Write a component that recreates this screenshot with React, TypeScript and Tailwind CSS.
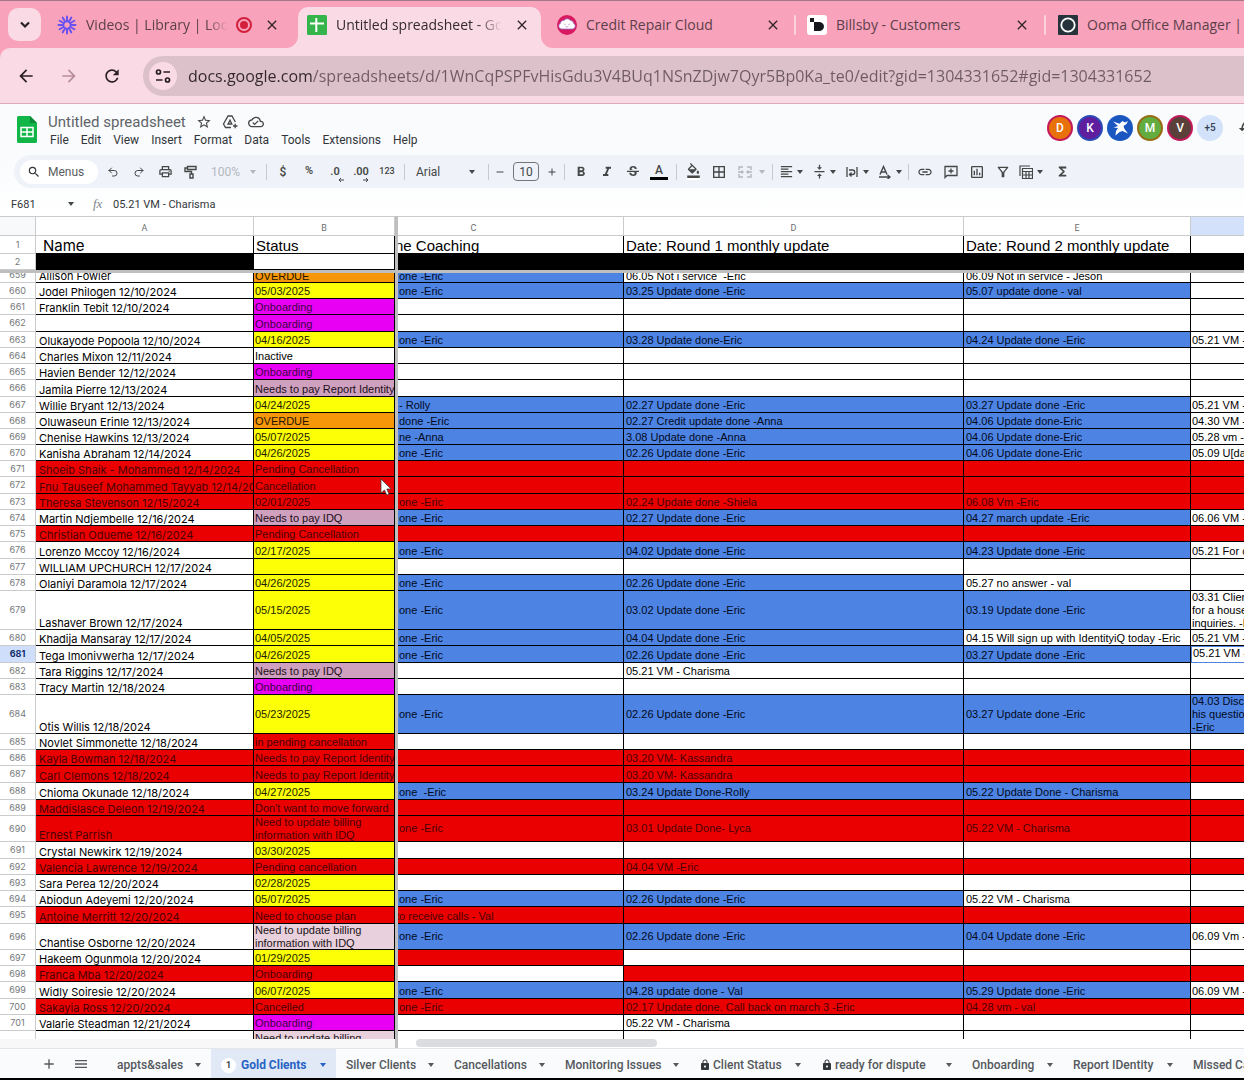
import type { ReactNode } from "react";
import { Redo2, Undo2 } from "lucide-react";
import {
    MdAdd,
    MdArrowBack,
    MdArrowForward,
    MdBorderAll,
    MdClose,
    MdFormatAlignLeft,
    MdFormatBold,
    MdFormatColorFill,
    MdFormatItalic,
    MdFunctions,
    MdHistory,
    MdInsertLink,
    MdLock,
    MdMenu,
    MdOutlineCloudDone,
    MdOutlineFilterAlt,
    MdOutlineInsertChart,
    MdOutlinePrint,
    MdRefresh,
    MdRemove,
    MdSearch,
    MdStarBorder,
    MdStrikethroughS,
    MdVerticalAlignCenter,
} from "react-icons/md";

type Tone = "white" | "blue" | "red" | "yellow" | "orange" | "magenta" | "mauve" | "pink" | "black";

type Cell = { tone: Tone; text: string; shift?: boolean };

type Row = {
    id: string;
    height: number;
    name: Cell;
    status: Cell;
    rest: Cell[];
};

const TONES: Record<Tone, string> = {
    white: "bg-white text-black",
    blue: "bg-[#4d83e2] text-[#020a1c]",
    red: "bg-[#ea0000] text-[#4a0000]",
    yellow: "bg-[#fdff06] text-[#1c1c00]",
    orange: "bg-[#f59708] text-[#241400]",
    magenta: "bg-[#e800f4] text-[#3c0044]",
    mauve: "bg-[#d0a0bf] text-[#1c0f18]",
    pink: "bg-[#e9d0dd] text-[#1c1418]",
    black: "bg-black text-black",
};

const cell = (tone: Tone) => (text = ""): Cell => ({ tone, text });
const white = cell("white");
const blue = cell("blue");
const red = cell("red");
const yellow = cell("yellow");
const orange = cell("orange");
const magenta = cell("magenta");
const mauve = cell("mauve");
const pink = cell("pink");

const blank = () => [white(), white(), white(), white()];
const cancelled = (c = "", d = "", e = "") => [red(c), red(d), red(e), red()];

const row = (id: string, height: number, name: Cell, status: Cell, rest: Cell[]): Row => ({ id, height, name, status, rest });

const ROWS: Row[] = [
    row("659", 10, white("Allison Fowler"), orange("OVERDUE"), [blue("one -Eric"), white("06.05 Not i service  -Eric"), white("06.09 Not in service - Jeson"), white()]),
    row("660", 16, white("Jodel Philogen 12/10/2024"), yellow("05/03/2025"), [blue("one -Eric"), blue("03.25 Update done -Eric"), blue("05.07 update done - val"), white()]),
    row("661", 16, white("Franklin Tebit 12/10/2024"), magenta("Onboarding"), blank()),
    row("662", 17, white(), magenta("Onboarding"), blank()),
    row("663", 16, white("Olukayode Popoola 12/10/2024"), yellow("04/16/2025"), [blue("one -Eric"), blue("03.28 Update done-Eric"), blue("04.24 Update done -Eric"), white("05.21 VM -")]),
    row("664", 16, white("Charles Mixon 12/11/2024"), white("Inactive"), blank()),
    row("665", 16, white("Havien Bender 12/12/2024"), magenta("Onboarding"), blank()),
    row("666", 17, white("Jamila Pierre 12/13/2024"), mauve("Needs to pay Report Identity"), blank()),
    row("667", 16, white("Willie Bryant 12/13/2024"), yellow("04/24/2025"), [blue("- Rolly"), blue("02.27 Update done -Eric"), blue("03.27 Update done -Eric"), white("05.21 VM -")]),
    row("668", 16, white("Oluwaseun Erinle 12/13/2024"), orange("OVERDUE"), [blue("done -Eric"), blue("02.27 Credit update done -Anna"), blue("04.06 Update done-Eric"), white("04.30 VM -")]),
    row("669", 16, white("Chenise Hawkins 12/13/2024"), yellow("05/07/2025"), [blue("ne -Anna"), blue("3.08 Update done -Anna"), blue("04.06 Update done-Eric"), white("05.28 vm -")]),
    row("670", 16, white("Kanisha Abraham 12/14/2024"), yellow("04/26/2025"), [blue("one -Eric"), blue("02.26 Update done -Eric"), blue("04.06 Update done-Eric"), white("05.09 U[da")]),
    row("671", 16, red("Shoeib Shaik - Mohammed 12/14/2024"), red("Pending Cancellation"), cancelled()),
    row("672", 17, red("Fnu Tauseef Mohammed Tayyab 12/14/20"), red("Cancellation"), cancelled()),
    row("673", 16, red("Theresa Stevenson 12/15/2024"), red("02/01/2025"), cancelled("one -Eric", "02.24 Update done -Shiela", "06.08 Vm -Eric")),
    row("674", 16, white("Martin Ndjembelle 12/16/2024"), mauve("Needs to pay IDQ"), [blue("one -Eric"), blue("02.27 Update done -Eric"), blue("04.27 march update -Eric"), white("06.06 VM -")]),
    row("675", 16, red("Christian Odueme 12/16/2024"), red("Pending Cancellation"), cancelled()),
    row("676", 17, white("Lorenzo Mccoy 12/16/2024"), yellow("02/17/2025"), [blue("one -Eric"), blue("04.02 Update done -Eric"), blue("04.23 Update done -Eric"), white("05.21 For c")]),
    row("677", 16, white("WILLIAM UPCHURCH 12/17/2024"), yellow(), blank()),
    row("678", 16, white("Olaniyi Daramola 12/17/2024"), yellow("04/26/2025"), [blue("one -Eric"), blue("02.26 Update done -Eric"), white("05.27 no answer - val"), white()]),
    row("679", 39, white("Lashaver Brown 12/17/2024"), yellow("05/15/2025"), [blue("one -Eric"), blue("03.02 Update done -Eric"), blue("03.19 Update done -Eric"), white("03.31 Clien\nfor a house\ninquiries. -E")]),
    row("680", 16, white("Khadija Mansaray 12/17/2024"), yellow("04/05/2025"), [blue("one -Eric"), blue("04.04 Update done -Eric"), white("04.15 Will sign up with IdentityiQ today -Eric"), white("05.21 VM -")]),
    row("681", 17, white("Tega Imonivwerha 12/17/2024"), yellow("04/26/2025"), [blue("one -Eric"), blue("02.26 Update done -Eric"), blue("03.27 Update done -Eric"), white("05.21 VM -")]),
    row("682", 16, white("Tara Riggins 12/17/2024"), mauve("Needs to pay IDQ"), [white(), white("05.21 VM - Charisma"), white(), white()]),
    row("683", 16, white("Tracy Martin 12/18/2024"), magenta("Onboarding"), blank()),
    row("684", 39, white("Otis Willis 12/18/2024"), yellow("05/23/2025"), [blue("one -Eric"), blue("02.26 Update done -Eric"), blue("03.27 Update done -Eric"), blue("04.03 Disc\nhis questio\n-Eric")]),
    row("685", 16, white("Novlet Simmonette 12/18/2024"), red("in pending cancellation"), blank()),
    row("686", 16, red("Kayla Bowman 12/18/2024"), red("Needs to pay Report Identity"), cancelled("", "03.20 VM- Kassandra")),
    row("687", 17, red("Carl Clemons 12/18/2024"), red("Needs to pay Report Identity"), cancelled("", "03.20 VM- Kassandra")),
    row("688", 17, white("Chioma Okunade 12/18/2024"), yellow("04/27/2025"), [blue("one  -Eric"), blue("03.24 Update Done-Rolly"), blue("05.22 Update Done - Charisma"), white()]),
    row("689", 16, red("Maddislasce Deleon 12/19/2024"), red("Don't want to move forward"), cancelled()),
    row("690", 26, red("Ernest Parrish"), red("Need to update billing\ninformation with IDQ"), cancelled("one -Eric", "03.01 Update Done- Lyca", "05.22 VM - Charisma")),
    row("691", 17, white("Crystal Newkirk 12/19/2024"), yellow("03/30/2025"), blank()),
    row("692", 16, red("Valencia Lawrence 12/19/2024"), red("Pending cancellation"), cancelled("", "04.04 VM -Eric")),
    row("693", 16, white("Sara Perea 12/20/2024"), yellow("02/28/2025"), blank()),
    row("694", 16, white("Abiodun Adeyemi 12/20/2024"), yellow("05/07/2025"), [blue("one -Eric"), blue("02.26 Update done -Eric"), white("05.22 VM - Charisma"), white()]),
    row("695", 17, red("Antoine Merritt 12/20/2024"), red("Need to choose plan"), [{ tone: "red", text: "to receive calls - Val", shift: true }, red(), red(), red()]),
    row("696", 26, white("Chantise Osborne 12/20/2024"), pink("Need to update billing\ninformation with IDQ"), [blue("one -Eric"), blue("02.26 Update done -Eric"), blue("04.04 Update done -Eric"), white("06.09 Vm -")]),
    row("697", 16, white("Hakeem Ogunmola 12/20/2024"), yellow("01/29/2025"), [red(), white(), white(), white()]),
    row("698", 16, red("Franca Mba 12/20/2024"), red("Onboarding"), [white(), red(), red(), red()]),
    row("699", 17, white("Widly Soiresie 12/20/2024"), yellow("06/07/2025"), [blue("one -Eric"), blue("04.28 update done - Val"), blue("05.29 Update done -Eric"), white("06.09 VM -")]),
    row("700", 16, red("Sakayia Ross 12/20/2024"), red("Cancelled"), cancelled("one -Eric", "02.17 Update done. Call back on march 3 -Eric", "04.28 vm - val")),
    row("701", 16, white("Valarie Steadman 12/21/2024"), magenta("Onboarding"), [white(), white("05.22 VM - Charisma"), white(), white()]),
];

const MENUS = ["File", "Edit", "View", "Insert", "Format", "Data", "Tools", "Extensions", "Help"];

const SHEETS = [
    { label: "appts&sales", width: "w-[104px]" },
    { label: "Gold Clients", width: "w-[125px]", active: true },
    { label: "Silver Clients", width: "w-[108px]" },
    { label: "Cancellations", width: "w-[111px]" },
    { label: "Monitoring Issues", width: "w-[134px]" },
    { label: "Client Status", width: "w-[122px]", locked: true },
    { label: "ready for dispute", width: "w-[151px]", locked: true },
    { label: "Onboarding", width: "w-[101px]" },
    { label: "Report IDentity", width: "w-[120px]" },
    { label: "Missed Calls", width: "w-[120px]" },
];

/* ---------- Browser chrome ---------- */

function LoomIcon() {
    return (
        <svg viewBox="0 0 20 20" className="size-5 shrink-0">
            <g stroke="#6a52f0" strokeWidth="2" strokeLinecap="round">
                {[0, 30, 60, 90, 120, 150, 180, 210, 240, 270, 300, 330].map((a) => (
                    <line key={a} x1="10" y1="1.5" x2="10" y2="6" transform={`rotate(${a} 10 10)`} />
                ))}
            </g>
            <circle cx="10" cy="10" r="3.6" fill="none" stroke="#6a52f0" strokeWidth="1.8" />
        </svg>
    );
}

function SheetFavicon() {
    return (
        <svg viewBox="0 0 20 20" className="size-5 shrink-0">
            <rect width="20" height="20" rx="1.5" fill="#34b44a" />
            <path d="M9.3 3v14M3 8.5h14" stroke="#fff" strokeWidth="2" />
        </svg>
    );
}

function CloudFavicon() {
    return (
        <svg viewBox="0 0 20 20" className="size-5 shrink-0">
            <circle cx="10" cy="10" r="10" fill="#d81b60" />
            <path d="M4.500 14a3 3 0 0 1-1-5.700A3 3 0 0 1 7 5.500a4 4 0 0 1 6.500 0 3 3 0 0 1 3 2.800A3 3 0 0 1 15.500 14z" fill="#fff" stroke="#8a6bd0" strokeWidth=".7" />
            <path d="M7 9.500q.8-1 1.600 0M11.400 9.500q.8-1 1.600 0M8.500 11.500q1.500 1 3 0" stroke="#b98ac4" strokeWidth=".8" fill="none" />
        </svg>
    );
}

function BillsbyIcon() {
    return (
        <svg viewBox="0 0 20 20" className="size-5 shrink-0">
            <rect width="20" height="20" rx="3" fill="#fff" />
            <path d="M3 3h4v4H3zM7 7h5a5 4.500 0 0 1 0 9H7z" fill="#15171c" />
        </svg>
    );
}

function OomaIcon() {
    return (
        <svg viewBox="0 0 20 20" className="size-5 shrink-0">
            <rect width="20" height="20" rx="1" fill="#27333a" />
            <circle cx="10" cy="10" r="6.700" fill="none" stroke="#fff" strokeWidth="1.800" />
        </svg>
    );
}

type TabProps = { icon: ReactNode; title: string; width: string; active?: boolean; recording?: boolean; fade?: boolean; divider?: boolean };

function BrowserTab({ icon, title, width, active, recording, fade, divider }: TabProps) {
    return (
        <div
            className={`relative flex h-full shrink-0 items-center pb-[6px] ${width} ${active ? "rounded-t-[10px] bg-[#fadae5] text-[#332a2e]" : "text-[#5c4049]"}`}
        >
            {active && (
                <>
                    <svg viewBox="0 0 12 12" className="absolute bottom-0 -left-3 size-3"><path d="M12 0v12H0A12 12 0 0 0 12 0" fill="#fadae5" /></svg>
                    <svg viewBox="0 0 12 12" className="absolute -right-3 bottom-0 size-3"><path d="M0 0v12h12A12 12 0 0 1 0 0" fill="#fadae5" /></svg>
                </>
            )}
            <button className="flex min-w-0 flex-1 items-center gap-[9px] text-left">
                {icon}
                <span className={`min-w-0 flex-1 overflow-hidden text-sm whitespace-nowrap ${fade ? "mask-r-from-85%" : ""}`}>{title}</span>
            </button>
            {recording && (
                <span className="ml-2 flex size-4 items-center justify-center rounded-full border-2 border-[#d3203c]">
                    <span className="size-2 rounded-full bg-[#d3203c]" />
                </span>
            )}
            <button aria-label={`Close ${title}`} className="ml-3 text-[#33262b]">
                <MdClose className="size-4" />
            </button>
            {divider && <span className="absolute right-0 h-5 w-[2px] rounded bg-[#fbd3df]" />}
        </div>
    );
}

function Browser() {
    return (
        <div className="bg-[#f8a2bc] font-['Open_Sans','Noto_Sans',sans-serif]">
            <div className="flex h-12 items-stretch overflow-hidden border-t border-[#a3788a] pt-[6px]">
                <button aria-label="Search tabs" className="mt-px ml-2 flex size-[33px] shrink-0 items-center justify-center rounded-[10px] bg-[#fadae5]">
                    <svg viewBox="0 0 12 8" className="h-2 w-3"><path d="M2 1.500l4 4 4-4" fill="none" stroke="#2a1f23" strokeWidth="2.200" /></svg>
                </button>
                <BrowserTab icon={<LoomIcon />} title="Videos | Library | Loom" width="w-[257px] pl-4 pr-[18px]" recording fade />
                <BrowserTab icon={<SheetFavicon />} title="Untitled spreadsheet - Google Sheets" width="w-[243px] pl-[9px] pr-[11px]" active fade />
                <BrowserTab icon={<CloudFavicon />} title="Credit Repair Cloud" width="w-[255px] pl-4 pr-[15px]" divider />
                <BrowserTab icon={<BillsbyIcon />} title="Billsby - Customers" width="w-[250px] pl-[11px] pr-4" divider />
                <BrowserTab icon={<OomaIcon />} title="Ooma Office Manager | Overview" width="w-[249px] pl-3" />
            </div>
            <div className="flex h-14 items-center overflow-hidden rounded-tl-[10px] border-b border-[#dcaabb] bg-[#fadae5]">
                <button aria-label="Back" className="ml-4 text-[#2a1f23]"><MdArrowBack className="size-5" /></button>
                <button aria-label="Forward" className="ml-[23px] text-[#b88d9c]"><MdArrowForward className="size-5" /></button>
                <button aria-label="Reload" className="ml-[23px] text-[#2a1f23]"><MdRefresh className="size-5" /></button>
                <div className="-mr-8 ml-[21px] flex h-10 flex-1 items-center rounded-full bg-[#dcc1cb] pl-[6px]">
                    <button aria-label="Site information" className="flex size-7 shrink-0 items-center justify-center rounded-full bg-[#fadae5]">
                        <svg viewBox="0 0 16 16" className="size-4" fill="none" stroke="#2a1f23" strokeWidth="1.700">
                            <circle cx="3.500" cy="4" r="2" />
                            <path d="M8.500 4H15M1 12h6.500" />
                            <circle cx="12.500" cy="12" r="2" />
                        </svg>
                    </button>
                    <input
                        aria-label="Address"
                        className="ml-[11px] w-full bg-linear-to-r from-[#33262b] from-[125px] to-[#705a62] to-[125px] bg-clip-text text-base text-transparent outline-none"
                        defaultValue="docs.google.com/spreadsheets/d/1WnCqPSPFvHisGdu3V4BUq1NSnZDjw7Qyr5Bp0Ka_te0/edit?gid=1304331652#gid=1304331652"
                    />
                </div>
            </div>
        </div>
    );
}

/* ---------- Document header ---------- */

function SheetsLogo() {
    return (
        <svg viewBox="0 0 20 27" className="h-[27px] w-5 shrink-0">
            <path d="M1.500 0H13l7 7v18.500a1.500 1.500 0 0 1-1.500 1.500h-17A1.500 1.500 0 0 1 0 25.500v-24A1.500 1.500 0 0 1 1.500 0z" fill="#12b648" />
            <path d="M13 0l7 7h-7z" fill="#0b8a37" />
            <path d="M4 11.500h12v9H4zM4 16h12M10 11.500v9" fill="none" stroke="#fff" strokeWidth="1.500" />
        </svg>
    );
}

function Avatar({ letter, tone }: { letter: string; tone: string }) {
    return (
        <button className={`flex size-[26px] shrink-0 items-center justify-center rounded-full border-2 text-xs font-medium text-white ${tone}`}>{letter}</button>
    );
}

function DocHeader() {
    return (
        <header className="flex h-[51px] overflow-hidden bg-[#f9fbfd] pl-[17px] text-[#444746]">
            <div className="pt-3"><SheetsLogo /></div>
            <div className="ml-[11px] pt-2">
                <div className="flex h-5 items-center">
                    <h1 className="w-[148px] text-[15px] leading-5 whitespace-nowrap text-[#5f6368]">Untitled spreadsheet</h1>
                    <button aria-label="Star"><MdStarBorder className="size-4" /></button>
                    <button aria-label="Add shortcut to Drive" className="ml-[10px]">
                        <svg viewBox="0 0 16 16" className="size-4" fill="none" stroke="currentColor" strokeWidth="1.300">
                            <path d="M9 13.500H3.500L1.500 10l4.500-8h4l3.300 6M6 10l2-3.800L9.800 10zM11 12h4.500M13.200 9.800v4.500" />
                        </svg>
                    </button>
                    <button aria-label="Document status" className="ml-[10px]"><MdOutlineCloudDone className="size-4" /></button>
                </div>
                <nav className="flex h-4 gap-3 pl-[2px] text-xs text-[#333639]">
                    {MENUS.map((m) => (
                        <button key={m}>{m}</button>
                    ))}
                </nav>
            </div>
            <div className="-mr-[14px] ml-auto flex items-center gap-1 pb-1">
                <Avatar letter="D" tone="border-[#c2185b] bg-[#e8710a]" />
                <Avatar letter="K" tone="border-[#2a4bb8] bg-[#5e1e9e]" />
                <button aria-label="Collaborator" className="flex size-[26px] items-center justify-center rounded-full bg-[#1a56c0]">
                    <svg viewBox="0 0 20 20" className="size-5" fill="#fff">
                        <path d="M3 3.500l6.500 2.200 3-2.700 2.500 1.500L18 3l-1.500 3-3 2 1 3 3.500 4.500-5.500-2.500-3 1-4 3.500.5-4.500L8 10l-4.500-.5L8 8z" />
                    </svg>
                </button>
                <Avatar letter="M" tone="border-[#9a6a10] bg-[#62ac40]" />
                <Avatar letter="V" tone="border-[#c2185b] bg-[#5a4038]" />
                <button className="size-[26px] rounded-full bg-[#d3e2fb] text-[10px] font-medium text-[#334155]">+5</button>
                <button aria-label="Version history" className="ml-[11px]"><MdHistory className="size-5" /></button>
            </div>
        </header>
    );
}

/* ---------- Toolbar ---------- */

function Tool({ label, children, faded }: { label: string; children: ReactNode; faded?: boolean }) {
    return (
        <button aria-label={label} className={`flex h-6 w-[26px] shrink-0 items-center justify-center ${faded ? "text-[#b4b8be]" : ""}`}>
            {children}
        </button>
    );
}

function DropTool({ label, children }: { label: string; children: ReactNode }) {
    return (
        <button aria-label={label} className="flex h-6 w-[33px] shrink-0 items-center">
            <span className="flex w-5 justify-center">{children}</span>
            <Caret />
        </button>
    );
}

function Caret() {
    return <svg viewBox="0 0 8 4" className="h-1 w-2 shrink-0" fill="currentColor"><path d="M1 0h6L4 4z" /></svg>;
}

function Divider() {
    return (
        <span className="flex w-2 shrink-0 justify-center">
            <span className="h-4 w-px bg-[#c7cad0]" />
        </span>
    );
}

function Toolbar() {
    return (
        <div className="overflow-hidden bg-linear-to-b from-[#f9fbfd] to-white">
            <div role="toolbar" className="-mr-4 ml-[14px] flex h-[33px] items-center rounded-full bg-[#eff2f9] pl-[6px] text-[#444746]">
                <button className="mr-[2px] flex h-6 w-[78px] shrink-0 items-center gap-[7px] rounded-full bg-white pl-[7px] text-xs text-[#5a5d60]">
                    <MdSearch className="size-[14px] text-[#333639]" />
                    <span>Menus</span>
                </button>
                <Tool label="Undo"><Undo2 className="size-3" /></Tool>
                <Tool label="Redo"><Redo2 className="size-3" /></Tool>
                <Tool label="Print"><MdOutlinePrint className="size-[15px]" /></Tool>
                <Tool label="Paint format">
                    <svg viewBox="0 0 14 14" className="size-[14px]" fill="none" stroke="currentColor" strokeWidth="1.400">
                        <path d="M3.500 1.500h8.500v3H3.500zM3.500 3H1v3.500h6.500V9" />
                        <path d="M6 9h3v4H6z" />
                    </svg>
                </Tool>
                <button aria-label="Zoom" className="flex w-[58px] shrink-0 items-center gap-2 pl-[6px] text-xs text-[#b4b8be]">
                    <span className="w-[31px]">100%</span>
                    <Caret />
                </button>
                <Divider />
                <Tool label="Format as currency"><span className="text-xs font-medium">$</span></Tool>
                <Tool label="Format as percent"><span className="text-[11px] font-medium">%</span></Tool>
                <Tool label="Decrease decimal places">
                    <span className="relative text-[11px] leading-3 font-semibold">
                        .0
                        <svg viewBox="0 0 6 4" className="absolute -right-1 -bottom-1 h-1 w-[6px]" fill="none" stroke="currentColor"><path d="M6 2H1M3 0L1 2l2 2" /></svg>
                    </span>
                </Tool>
                <Tool label="Increase decimal places">
                    <span className="relative text-[11px] leading-3 font-semibold">
                        .00
                        <svg viewBox="0 0 6 4" className="absolute right-0 -bottom-1 h-1 w-[6px]" fill="none" stroke="currentColor"><path d="M0 2h5M3 0l2 2-2 2" /></svg>
                    </span>
                </Tool>
                <Tool label="More formats"><span className="text-[9px] font-medium">123</span></Tool>
                <Divider />
                <button aria-label="Font" className="flex w-[76px] shrink-0 items-center justify-between pr-2 pl-2 text-xs">
                    Arial
                    <Caret />
                </button>
                <Divider />
                <button aria-label="Decrease font size" className="w-4 shrink-0"><MdRemove className="mx-auto size-3" /></button>
                <input aria-label="Font size" defaultValue="10" className="mx-[5px] h-[19px] w-[26px] shrink-0 rounded border border-[#747775] text-center text-xs" />
                <button aria-label="Increase font size" className="w-4 shrink-0"><MdAdd className="mx-auto size-3" /></button>
                <Divider />
                <Tool label="Bold"><MdFormatBold className="size-4" /></Tool>
                <Tool label="Italic"><MdFormatItalic className="size-4" /></Tool>
                <Tool label="Strikethrough"><MdStrikethroughS className="size-4" /></Tool>
                <Tool label="Text color">
                    <span className="flex w-[18px] flex-col items-center border-b-[3px] border-black text-xs leading-[13px] font-medium">A</span>
                </Tool>
                <Divider />
                <Tool label="Fill color">
                    <span className="border-b-2 border-white"><MdFormatColorFill className="size-[15px]" /></span>
                </Tool>
                <Tool label="Borders"><MdBorderAll className="size-4" /></Tool>
                <Tool label="Merge cells" faded>
                    <svg viewBox="0 0 14 12" className="h-3 w-[14px]" fill="none" stroke="currentColor" strokeWidth="1.400">
                        <path d="M5 1H1v3M9 1h4v3M5 11H1V8M9 11h4V8M0 6h5M14 6H9M3.500 4.500L5 6 3.500 7.500M10.500 4.500L9 6l1.500 1.500" />
                    </svg>
                </Tool>
                <span className="w-[10px] shrink-0 text-[#b4b8be]"><Caret /></span>
                <Divider />
                <DropTool label="Horizontal align"><MdFormatAlignLeft className="size-[15px]" /></DropTool>
                <DropTool label="Vertical align"><MdVerticalAlignCenter className="size-[15px]" /></DropTool>
                <DropTool label="Text wrapping">
                    <svg viewBox="0 0 12 12" className="size-3" fill="none" stroke="currentColor" strokeWidth="1.300">
                        <path d="M1 1v10M11 1v10M3 4h3.500a2 2 0 0 1 0 4.500H4M5.500 6.500l-2 2 2 2" />
                    </svg>
                </DropTool>
                <DropTool label="Text rotation">
                    <svg viewBox="0 0 14 14" className="size-[14px]" fill="none" stroke="currentColor" strokeWidth="1.400">
                        <path d="M2 9.500L5.500 1.500 9 9.500M3.200 7h4.600M1 12h10M9.500 10l2.500 2-2.500 2" />
                    </svg>
                </DropTool>
                <span className="-ml-1"><Divider /></span>
                <Tool label="Insert link"><MdInsertLink className="size-4" /></Tool>
                <Tool label="Insert comment">
                    <svg viewBox="0 0 14 14" className="size-[14px]" fill="none" stroke="currentColor" strokeWidth="1.300">
                        <path d="M1 12.500V1.500h12v9H3zM7 3.500v5M4.500 6h5" />
                    </svg>
                </Tool>
                <Tool label="Insert chart"><MdOutlineInsertChart className="size-4" /></Tool>
                <Tool label="Create a filter"><MdOutlineFilterAlt className="size-4" /></Tool>
                <DropTool label="Filter views">
                    <svg viewBox="0 0 14 14" className="size-[14px]" fill="none" stroke="currentColor" strokeWidth="1.200">
                        <path d="M1 11V1h10M3.500 3.500h10v10h-10zM3.500 6.500h10M3.500 10h10M7 6.500v7M10 6.500v7" />
                    </svg>
                </DropTool>
                <Tool label="Functions"><MdFunctions className="size-[15px]" /></Tool>
            </div>
            <div className="flex h-[28px] items-center pt-1 text-[11px] text-[#333639]">
                <input aria-label="Name box" defaultValue="F681" className="h-5 w-[67px] bg-transparent pl-[11px] outline-none" />
                <button aria-label="Named ranges" className="text-[#444746]"><Caret /></button>
                <span className="ml-[18px] w-5 font-['Liberation_Serif',serif] text-[13px] text-[#80868b] italic">fx</span>
                <input aria-label="Formula bar" defaultValue="05.21 VM - Charisma" className="h-5 flex-1 bg-transparent outline-none" />
            </div>
        </div>
    );
}

/* ---------- Grid ---------- */

function NumberCell({ id, selected }: { id: string; selected?: boolean }) {
    return (
        <th
            scope="row"
            className={`border-r border-b border-[#c9cbcd] p-0 text-center font-['Inter',sans-serif] text-[9px] leading-[10px] ${selected ? "bg-[#cfdffb] font-bold text-[#12306b]" : "bg-white font-normal text-[#75787b]"}`}
        >
            {id}
        </th>
    );
}

function DataCell({ cell, height, place, last }: { cell: Cell; height: number; place: string; last?: boolean }) {
    return (
        <td className={`border-b border-black p-0 ${last ? "" : "border-r"} ${TONES[cell.tone]}`}>
            <div className={`flex overflow-hidden whitespace-pre ${place}`} style={{ height: height - 1 }}>
                <span className={cell.shift ? "-ml-[3px]" : ""}>{cell.text}</span>
            </div>
        </td>
    );
}

function GridRow({ data }: { data: Row }) {
    const { id, height, name, status, rest } = data;
    const clipped = id === "659";
    // Single-line cells sit one pixel low, three-line cells fill their row
    const align = clipped ? "items-end leading-[12px]" : height < 20 ? "items-center pt-[2px] leading-[13px]" : "items-center leading-[13px]";
    const [c, d, e, f] = rest;

    return (
        <tr>
            {clipped ? (
                <th scope="row" className="border-r border-b border-[#c9cbcd] p-0 font-['Inter',sans-serif] text-[9px] font-normal text-[#75787b]">
                    <div className="flex h-[9px] items-end justify-center overflow-hidden pb-[3px] leading-[9px]">{id}</div>
                </th>
            ) : (
                <NumberCell id={id} selected={id === "681"} />
            )}
            <DataCell cell={name} height={height} place="items-end pl-[3px] leading-[11px] font-['Inter',sans-serif]" />
            <DataCell cell={status} height={height} place={`${align} pl-px`} />
            <td className="bg-[#bfbfbf] p-0" />
            <DataCell cell={c} height={height} place={`${align} pl-px`} />
            <DataCell cell={d} height={height} place={`${align} pl-[2px]`} />
            <DataCell cell={e} height={height} place={`${align} pl-[2px]`} />
            {id === "681" ? (
                <td className="border-y border-l border-[#4f83dd] bg-white p-0">
                    <div className="flex h-[15px] items-start overflow-hidden pl-px leading-[13px] whitespace-pre text-black">{f.text}</div>
                </td>
            ) : (
                <DataCell cell={f} height={height} place={`${align} pl-px`} last />
            )}
        </tr>
    );
}

function ColumnHead({ label, selected }: { label: string; selected?: boolean }) {
    return (
        <th
            scope="col"
            className={`h-5 border-y border-[#c9cbcd] p-0 pt-[3px] font-['Roboto',sans-serif] text-[9px] leading-3 font-normal text-[#6b6e71] ${selected ? "bg-[#d3e1fb]" : "border-r bg-white"}`}
        >
            {label}
        </th>
    );
}

function Grid() {
    return (
        <div className="relative overflow-hidden">
            <table className="w-full table-fixed border-separate border-spacing-0 font-['Liberation_Sans',Arial,sans-serif] text-[11px]">
                <colgroup>
                    <col className="w-9" />
                    <col className="w-[218px]" />
                    <col className="w-[141px]" />
                    <col className="w-[3px]" />
                    <col className="w-[226px]" />
                    <col className="w-[340px]" />
                    <col className="w-[227px]" />
                    <col />
                </colgroup>
                <thead>
                    <tr>
                        <th className="border-y border-r border-[#c9cbcd] bg-[#f8f9fa] p-0" />
                        <ColumnHead label="A" />
                        <ColumnHead label="B" />
                        <td className="bg-[#bfbfbf] p-0" />
                        <th scope="col" className="h-5 border-y border-r border-[#c9cbcd] bg-white p-0 pt-[3px] pr-[74px] font-['Roboto',sans-serif] text-[9px] leading-3 font-normal text-[#6b6e71]">C</th>
                        <ColumnHead label="D" />
                        <ColumnHead label="E" />
                        <ColumnHead label="" selected />
                    </tr>
                    <tr className="text-[15px] leading-[17px]">
                        <NumberCell id="1" />
                        <DataCell cell={white("Name")} height={18} place="items-center pt-px pl-[7px] font-['Inter',sans-serif]" />
                        <DataCell cell={white("Status")} height={18} place="items-center pt-px pl-[2px]" />
                        <td className="bg-[#bfbfbf] p-0" />
                        <DataCell cell={{ tone: "white", text: "ne Coaching", shift: true }} height={18} place="items-center pt-px" />
                        <DataCell cell={white("Date: Round 1 monthly update")} height={18} place="items-center pt-px pl-[2px]" />
                        <DataCell cell={white("Date: Round 2 monthly update")} height={18} place="items-center pt-px pl-[2px]" />
                        <DataCell cell={white()} height={18} place="items-center" last />
                    </tr>
                    <tr>
                        <NumberCell id="2" />
                        <DataCell cell={{ tone: "black", text: "" }} height={16} place="" />
                        <DataCell cell={white()} height={16} place="" />
                        <td className="bg-[#bfbfbf] p-0" />
                        <td colSpan={4} className="bg-black p-0" />
                    </tr>
                    <tr>
                        <td colSpan={8} className="h-[3px] bg-[#bfbfbf] p-0" />
                    </tr>
                </thead>
                <tbody>
                    {ROWS.map((r) => (
                        <GridRow key={r.id} data={r} />
                    ))}
                    {/* Next row, cut off by the bottom of the viewport */}
                    <tr>
                        <td className="h-2 border-r border-[#c9cbcd] bg-white p-0" />
                        <td className="border-r border-black bg-white p-0" />
                        <td className="border-r border-black bg-[#e9d0dd] p-0">
                            <div className="h-2 overflow-hidden pl-px leading-[14px] whitespace-nowrap text-[#1c1418]">Need to update billing</div>
                        </td>
                        <td className="bg-[#bfbfbf] p-0" />
                        <td className="border-r border-black bg-white p-0" />
                        <td className="border-r border-black bg-white p-0" />
                        <td className="border-r border-black bg-white p-0" />
                        <td className="bg-white p-0" />
                    </tr>
                </tbody>
            </table>
            <svg viewBox="0 0 12 18" className="absolute top-[262px] left-[380px] h-[18px] w-3">
                <path d="M1 1v14l3.500-3 2.200 5 2.300-1-2.200-5H11z" fill="#fff" stroke="#444" strokeWidth=".8" />
            </svg>
        </div>
    );
}

/* ---------- Footer ---------- */

function SheetTabs() {
    return (
        <footer>
            <div className="flex h-[10px] border-b border-[#e4e6e9] bg-white">
                <div className="w-[395px] bg-[#f8f8f8]" />
                <div className="w-[3px] bg-[#bfbfbf]" />
                <div className="ml-[18px] h-2 w-[241px] rounded-full bg-[#dadce0]" />
            </div>
            <div className="flex h-[31px] overflow-hidden border-b-2 border-black bg-[#f9fbfd] text-xs font-medium text-[#55585c]">
                <button aria-label="Add sheet" className="ml-[41px] w-4 shrink-0 pt-px"><MdAdd className="size-4" /></button>
                <button aria-label="All sheets" className="mr-[18px] ml-4 w-4 shrink-0 pt-px"><MdMenu className="size-4" /></button>
                {SHEETS.map(({ label, width, active, locked }) => (
                    <button
                        key={label}
                        className={`flex shrink-0 items-center pt-[3px] pr-[9px] pl-[10px] whitespace-nowrap ${width} ${active ? "bg-[#e1e9f7] font-bold text-[#2763c4]" : ""}`}
                    >
                        {active && <span className="mr-[5px] flex size-[15px] items-center justify-center rounded-full bg-white text-[9px] text-[#444746]">1</span>}
                        {locked && <MdLock className="mr-[2px] size-3 text-[#333639]" />}
                        {label}
                        <span className="ml-auto"><Caret /></span>
                    </button>
                ))}
            </div>
        </footer>
    );
}

export default function App() {
    return (
        <div className="w-full overflow-hidden bg-white font-['Roboto',sans-serif]">
            <Browser />
            <DocHeader />
            <Toolbar />
            <Grid />
            <SheetTabs />
        </div>
    );
}
